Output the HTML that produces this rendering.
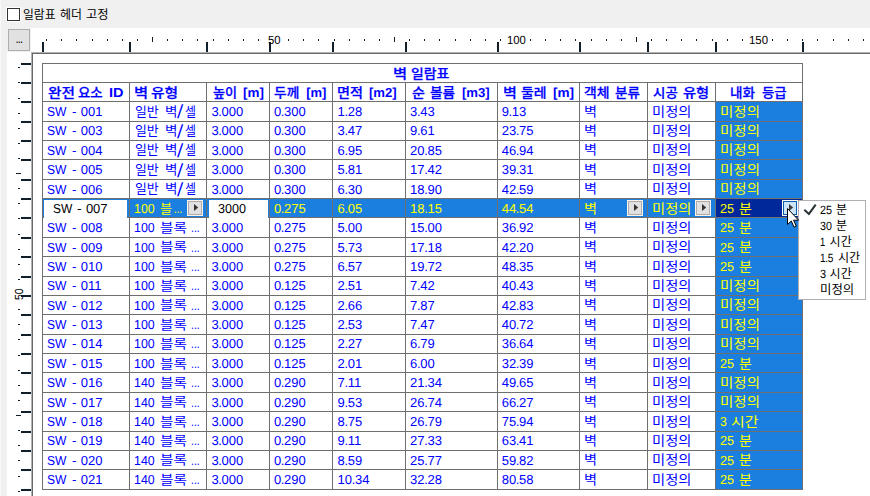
<!DOCTYPE html>
<html lang="ko"><head><meta charset="utf-8"><title>벽 일람표</title>
<style>
html,body{margin:0;padding:0;}
body{width:870px;height:496px;overflow:hidden;background:#f0f0f0;position:relative;font-family:"Liberation Sans","Noto Sans CJK KR",sans-serif;text-rendering:geometricPrecision;}
body>div,body>svg{position:absolute;}
.s{white-space:nowrap;transform-origin:0 0;line-height:20px;height:20px;color:#0000ff;}
.d{font-size:13px;}
.dk{font-size:13px;text-rendering:auto;}
.h{font-size:13px;font-weight:bold;}
.hk{font-size:13px;font-weight:500;-webkit-text-stroke:0.25px #0000ff;text-rendering:auto;}
.sl{font-size:19px;}
.m{font-size:12px;color:#000;}
.mk{font-size:12px;color:#000;text-rendering:auto;}
.lk{font-size:12px;color:#000;text-rendering:auto;}
.rl{font-size:11.8px;color:#000;}
.bt{font-size:10px;color:#1a1a1a;font-weight:bold;}
.y{color:#ffff00;}
.bk{color:#000;}
.p{margin:0 -0.4px;}
</style></head>
<body>
<div style="left:0px;top:0px;width:1px;height:496px;background:#f8f8f8;"></div>
<div style="left:6px;top:7px;width:15px;height:15px;background:#fff;"></div>
<div style="left:7px;top:8px;width:13px;height:13px;background:#fff;border:1px solid #333;box-sizing:border-box;"></div>
<div style="left:31px;top:28px;width:839px;height:24px;background:#fff;"></div>
<div style="left:7px;top:52px;width:24px;height:444px;background:#fff;"></div>
<div style="left:31px;top:52px;width:839px;height:444px;background:#fff;"></div>
<div style="left:8px;top:29px;width:22px;height:22px;background:#e1e1e1;border:1px solid #adadad;box-sizing:border-box;"></div>
<div style="left:31px;top:52px;width:839px;height:1px;background:#b4b4b4;"></div>
<div style="left:31px;top:52px;width:1px;height:444px;background:#b4b4b4;"></div>
<div style="left:32px;top:53px;width:838px;height:1px;background:#686868;"></div>
<div style="left:32px;top:53px;width:1px;height:443px;background:#686868;"></div>
<div style="left:46px;top:39px;width:1px;height:2px;background:#0f1e28;"></div>
<div style="left:61px;top:39px;width:1px;height:2px;background:#0f1e28;"></div>
<div style="left:76px;top:39px;width:1px;height:2px;background:#0f1e28;"></div>
<div style="left:92px;top:39px;width:1px;height:2px;background:#0f1e28;"></div>
<div style="left:107px;top:39px;width:1px;height:2px;background:#0f1e28;"></div>
<div style="left:122px;top:39px;width:1px;height:2px;background:#0f1e28;"></div>
<div style="left:137px;top:39px;width:1px;height:2px;background:#0f1e28;"></div>
<div style="left:152px;top:37px;width:1px;height:5px;background:#0f1e28;"></div>
<div style="left:167px;top:39px;width:1px;height:2px;background:#0f1e28;"></div>
<div style="left:182px;top:39px;width:1px;height:2px;background:#0f1e28;"></div>
<div style="left:197px;top:39px;width:1px;height:2px;background:#0f1e28;"></div>
<div style="left:213px;top:39px;width:1px;height:2px;background:#0f1e28;"></div>
<div style="left:228px;top:39px;width:1px;height:2px;background:#0f1e28;"></div>
<div style="left:243px;top:39px;width:1px;height:2px;background:#0f1e28;"></div>
<div style="left:258px;top:39px;width:1px;height:2px;background:#0f1e28;"></div>
<div style="left:288px;top:39px;width:1px;height:2px;background:#0f1e28;"></div>
<div style="left:303px;top:39px;width:1px;height:2px;background:#0f1e28;"></div>
<div style="left:318px;top:39px;width:1px;height:2px;background:#0f1e28;"></div>
<div style="left:334px;top:39px;width:1px;height:2px;background:#0f1e28;"></div>
<div style="left:349px;top:39px;width:1px;height:2px;background:#0f1e28;"></div>
<div style="left:364px;top:39px;width:1px;height:2px;background:#0f1e28;"></div>
<div style="left:379px;top:39px;width:1px;height:2px;background:#0f1e28;"></div>
<div style="left:394px;top:37px;width:1px;height:5px;background:#0f1e28;"></div>
<div style="left:409px;top:39px;width:1px;height:2px;background:#0f1e28;"></div>
<div style="left:424px;top:39px;width:1px;height:2px;background:#0f1e28;"></div>
<div style="left:439px;top:39px;width:1px;height:2px;background:#0f1e28;"></div>
<div style="left:455px;top:39px;width:1px;height:2px;background:#0f1e28;"></div>
<div style="left:470px;top:39px;width:1px;height:2px;background:#0f1e28;"></div>
<div style="left:485px;top:39px;width:1px;height:2px;background:#0f1e28;"></div>
<div style="left:500px;top:39px;width:1px;height:2px;background:#0f1e28;"></div>
<div style="left:530px;top:39px;width:1px;height:2px;background:#0f1e28;"></div>
<div style="left:545px;top:39px;width:1px;height:2px;background:#0f1e28;"></div>
<div style="left:560px;top:39px;width:1px;height:2px;background:#0f1e28;"></div>
<div style="left:575px;top:39px;width:1px;height:2px;background:#0f1e28;"></div>
<div style="left:591px;top:39px;width:1px;height:2px;background:#0f1e28;"></div>
<div style="left:606px;top:39px;width:1px;height:2px;background:#0f1e28;"></div>
<div style="left:621px;top:39px;width:1px;height:2px;background:#0f1e28;"></div>
<div style="left:636px;top:37px;width:1px;height:5px;background:#0f1e28;"></div>
<div style="left:651px;top:39px;width:1px;height:2px;background:#0f1e28;"></div>
<div style="left:666px;top:39px;width:1px;height:2px;background:#0f1e28;"></div>
<div style="left:681px;top:39px;width:1px;height:2px;background:#0f1e28;"></div>
<div style="left:696px;top:39px;width:1px;height:2px;background:#0f1e28;"></div>
<div style="left:712px;top:39px;width:1px;height:2px;background:#0f1e28;"></div>
<div style="left:727px;top:39px;width:1px;height:2px;background:#0f1e28;"></div>
<div style="left:742px;top:39px;width:1px;height:2px;background:#0f1e28;"></div>
<div style="left:772px;top:39px;width:1px;height:2px;background:#0f1e28;"></div>
<div style="left:787px;top:39px;width:1px;height:2px;background:#0f1e28;"></div>
<div style="left:802px;top:39px;width:1px;height:2px;background:#0f1e28;"></div>
<div style="left:817px;top:39px;width:1px;height:2px;background:#0f1e28;"></div>
<div style="left:833px;top:39px;width:1px;height:2px;background:#0f1e28;"></div>
<div style="left:848px;top:39px;width:1px;height:2px;background:#0f1e28;"></div>
<div style="left:863px;top:39px;width:1px;height:2px;background:#0f1e28;"></div>
<div style="left:42px;top:42px;width:2px;height:10px;background:#0f1e28;"></div>
<div style="left:129px;top:42px;width:2px;height:10px;background:#0f1e28;"></div>
<div style="left:206px;top:42px;width:2px;height:10px;background:#0f1e28;"></div>
<div style="left:269px;top:42px;width:2px;height:10px;background:#0f1e28;"></div>
<div style="left:332px;top:42px;width:2px;height:10px;background:#0f1e28;"></div>
<div style="left:405px;top:42px;width:2px;height:10px;background:#0f1e28;"></div>
<div style="left:497px;top:42px;width:2px;height:10px;background:#0f1e28;"></div>
<div style="left:579px;top:42px;width:2px;height:10px;background:#0f1e28;"></div>
<div style="left:647px;top:42px;width:2px;height:10px;background:#0f1e28;"></div>
<div style="left:715px;top:42px;width:2px;height:10px;background:#0f1e28;"></div>
<div style="left:802px;top:42px;width:2px;height:10px;background:#0f1e28;"></div>
<div style="left:18px;top:67px;width:2px;height:1px;background:#0f1e28;"></div>
<div style="left:18px;top:82px;width:2px;height:1px;background:#0f1e28;"></div>
<div style="left:18px;top:98px;width:2px;height:1px;background:#0f1e28;"></div>
<div style="left:18px;top:113px;width:2px;height:1px;background:#0f1e28;"></div>
<div style="left:18px;top:128px;width:2px;height:1px;background:#0f1e28;"></div>
<div style="left:18px;top:143px;width:2px;height:1px;background:#0f1e28;"></div>
<div style="left:18px;top:158px;width:2px;height:1px;background:#0f1e28;"></div>
<div style="left:16px;top:173px;width:5px;height:1px;background:#0f1e28;"></div>
<div style="left:18px;top:188px;width:2px;height:1px;background:#0f1e28;"></div>
<div style="left:18px;top:203px;width:2px;height:1px;background:#0f1e28;"></div>
<div style="left:18px;top:218px;width:2px;height:1px;background:#0f1e28;"></div>
<div style="left:18px;top:234px;width:2px;height:1px;background:#0f1e28;"></div>
<div style="left:18px;top:249px;width:2px;height:1px;background:#0f1e28;"></div>
<div style="left:18px;top:264px;width:2px;height:1px;background:#0f1e28;"></div>
<div style="left:18px;top:279px;width:2px;height:1px;background:#0f1e28;"></div>
<div class="s rl" style="left:8.6px;top:299.5px;transform:rotate(-90deg) scaleX(0.88);">50</div>
<div style="left:18px;top:309px;width:2px;height:1px;background:#0f1e28;"></div>
<div style="left:18px;top:324px;width:2px;height:1px;background:#0f1e28;"></div>
<div style="left:18px;top:339px;width:2px;height:1px;background:#0f1e28;"></div>
<div style="left:18px;top:355px;width:2px;height:1px;background:#0f1e28;"></div>
<div style="left:18px;top:370px;width:2px;height:1px;background:#0f1e28;"></div>
<div style="left:18px;top:385px;width:2px;height:1px;background:#0f1e28;"></div>
<div style="left:18px;top:400px;width:2px;height:1px;background:#0f1e28;"></div>
<div style="left:16px;top:415px;width:5px;height:1px;background:#0f1e28;"></div>
<div style="left:18px;top:430px;width:2px;height:1px;background:#0f1e28;"></div>
<div style="left:18px;top:445px;width:2px;height:1px;background:#0f1e28;"></div>
<div style="left:18px;top:460px;width:2px;height:1px;background:#0f1e28;"></div>
<div style="left:18px;top:476px;width:2px;height:1px;background:#0f1e28;"></div>
<div style="left:18px;top:491px;width:2px;height:1px;background:#0f1e28;"></div>
<div style="left:21px;top:63px;width:10px;height:2px;background:#0f1e28;"></div>
<div style="left:21px;top:82px;width:10px;height:2px;background:#0f1e28;"></div>
<div style="left:21px;top:101px;width:10px;height:2px;background:#0f1e28;"></div>
<div style="left:21px;top:121px;width:10px;height:2px;background:#0f1e28;"></div>
<div style="left:21px;top:140px;width:10px;height:2px;background:#0f1e28;"></div>
<div style="left:21px;top:159px;width:10px;height:2px;background:#0f1e28;"></div>
<div style="left:21px;top:179px;width:10px;height:2px;background:#0f1e28;"></div>
<div style="left:21px;top:198px;width:10px;height:2px;background:#0f1e28;"></div>
<div style="left:21px;top:217px;width:10px;height:2px;background:#0f1e28;"></div>
<div style="left:21px;top:237px;width:10px;height:2px;background:#0f1e28;"></div>
<div style="left:21px;top:256px;width:10px;height:2px;background:#0f1e28;"></div>
<div style="left:21px;top:276px;width:10px;height:2px;background:#0f1e28;"></div>
<div style="left:21px;top:295px;width:10px;height:2px;background:#0f1e28;"></div>
<div style="left:21px;top:314px;width:10px;height:2px;background:#0f1e28;"></div>
<div style="left:21px;top:334px;width:10px;height:2px;background:#0f1e28;"></div>
<div style="left:21px;top:353px;width:10px;height:2px;background:#0f1e28;"></div>
<div style="left:21px;top:372px;width:10px;height:2px;background:#0f1e28;"></div>
<div style="left:21px;top:392px;width:10px;height:2px;background:#0f1e28;"></div>
<div style="left:21px;top:411px;width:10px;height:2px;background:#0f1e28;"></div>
<div style="left:21px;top:431px;width:10px;height:2px;background:#0f1e28;"></div>
<div style="left:21px;top:450px;width:10px;height:2px;background:#0f1e28;"></div>
<div style="left:21px;top:469px;width:10px;height:2px;background:#0f1e28;"></div>
<div style="left:21px;top:489px;width:10px;height:2px;background:#0f1e28;"></div>
<div style="left:716px;top:102px;width:86px;height:387px;background:#1b7fe0;"></div>
<div style="left:43px;top:199px;width:759px;height:18px;background:#1b7fe0;"></div>
<div style="left:716px;top:199px;width:86px;height:18px;background:#00289a;"></div>
<div style="left:42px;top:63px;width:761px;height:1px;background:#6f6f6f;"></div>
<div style="left:42px;top:82px;width:761px;height:1px;background:#6f6f6f;"></div>
<div style="left:42px;top:101px;width:761px;height:1px;background:#6f6f6f;"></div>
<div style="left:42px;top:121px;width:761px;height:1px;background:#6f6f6f;"></div>
<div style="left:42px;top:140px;width:761px;height:1px;background:#6f6f6f;"></div>
<div style="left:42px;top:159px;width:761px;height:1px;background:#6f6f6f;"></div>
<div style="left:42px;top:179px;width:761px;height:1px;background:#6f6f6f;"></div>
<div style="left:42px;top:198px;width:761px;height:1px;background:#6f6f6f;"></div>
<div style="left:42px;top:217px;width:761px;height:1px;background:#6f6f6f;"></div>
<div style="left:42px;top:237px;width:761px;height:1px;background:#6f6f6f;"></div>
<div style="left:42px;top:256px;width:761px;height:1px;background:#6f6f6f;"></div>
<div style="left:42px;top:276px;width:761px;height:1px;background:#6f6f6f;"></div>
<div style="left:42px;top:295px;width:761px;height:1px;background:#6f6f6f;"></div>
<div style="left:42px;top:314px;width:761px;height:1px;background:#6f6f6f;"></div>
<div style="left:42px;top:334px;width:761px;height:1px;background:#6f6f6f;"></div>
<div style="left:42px;top:353px;width:761px;height:1px;background:#6f6f6f;"></div>
<div style="left:42px;top:372px;width:761px;height:1px;background:#6f6f6f;"></div>
<div style="left:42px;top:392px;width:761px;height:1px;background:#6f6f6f;"></div>
<div style="left:42px;top:411px;width:761px;height:1px;background:#6f6f6f;"></div>
<div style="left:42px;top:431px;width:761px;height:1px;background:#6f6f6f;"></div>
<div style="left:42px;top:450px;width:761px;height:1px;background:#6f6f6f;"></div>
<div style="left:42px;top:469px;width:761px;height:1px;background:#6f6f6f;"></div>
<div style="left:42px;top:489px;width:761px;height:1px;background:#6f6f6f;"></div>
<div style="left:42px;top:63px;width:1px;height:427px;background:#6f6f6f;"></div>
<div style="left:129px;top:82px;width:1px;height:408px;background:#6f6f6f;"></div>
<div style="left:206px;top:82px;width:1px;height:408px;background:#6f6f6f;"></div>
<div style="left:269px;top:82px;width:1px;height:408px;background:#6f6f6f;"></div>
<div style="left:332px;top:82px;width:1px;height:408px;background:#6f6f6f;"></div>
<div style="left:405px;top:82px;width:1px;height:408px;background:#6f6f6f;"></div>
<div style="left:497px;top:82px;width:1px;height:408px;background:#6f6f6f;"></div>
<div style="left:579px;top:82px;width:1px;height:408px;background:#6f6f6f;"></div>
<div style="left:647px;top:82px;width:1px;height:408px;background:#6f6f6f;"></div>
<div style="left:715px;top:82px;width:1px;height:408px;background:#6f6f6f;"></div>
<div style="left:802px;top:63px;width:1px;height:427px;background:#6f6f6f;"></div>
<div style="left:44px;top:200px;width:83px;height:18px;background:#fff;"></div>
<div style="left:209px;top:200px;width:59px;height:18px;background:#fff;"></div>
<div style="left:187px;top:200px;width:16px;height:16px;background:#e1e1e1;border:1px solid #fcf3ea;box-sizing:border-box;box-shadow:inset 0 0 0 1px #adadad;"></div>
<svg style="left:187px;top:200px;" width="16" height="16" viewBox="0 0 16 16"><path d="M7 4 L11.2 7.5 L7 11 Z" fill="#333"/></svg>
<div style="left:627px;top:200px;width:16px;height:16px;background:#e1e1e1;border:1px solid #fcf3ea;box-sizing:border-box;box-shadow:inset 0 0 0 1px #adadad;"></div>
<svg style="left:627px;top:200px;" width="16" height="16" viewBox="0 0 16 16"><path d="M7 4 L11.2 7.5 L7 11 Z" fill="#333"/></svg>
<div style="left:695px;top:200px;width:16px;height:16px;background:#e1e1e1;border:1px solid #fcf3ea;box-sizing:border-box;box-shadow:inset 0 0 0 1px #adadad;"></div>
<svg style="left:695px;top:200px;" width="16" height="16" viewBox="0 0 16 16"><path d="M7 4 L11.2 7.5 L7 11 Z" fill="#333"/></svg>
<div style="left:782px;top:200px;width:16px;height:16px;background:#cce4f7;border:1px solid #fff;box-sizing:border-box;box-shadow:inset 0 0 0 1px #0a5cb0;"></div>
<svg style="left:782px;top:200px;" width="16" height="16" viewBox="0 0 16 16"><path d="M7 4 L11.2 7.5 L7 11 Z" fill="#3c3c3c"/></svg>
<div style="left:798px;top:200px;width:68px;height:100px;background:#fff;border:1px solid #b0b0b6;box-sizing:border-box;"></div>
<div class="s hk" style="left:392.57px;top:64px;transform:scaleX(1.184);">벽</div>
<div class="s hk" style="left:411.40px;top:64px;transform:scaleX(1.068);">일람표</div>
<div class="s hk" style="left:47.54px;top:83px;transform:scaleX(1.124);">완전</div>
<div class="s hk" style="left:78.23px;top:83px;transform:scaleX(1.033);">요소</div>
<div class="s h" style="left:108.56px;top:83.07px;transform:scaleX(1.115);">ID</div>
<div class="s hk" style="left:134.32px;top:83px;transform:scaleX(1.184);">벽</div>
<div class="s hk" style="left:151.18px;top:83px;transform:scaleX(1.136);">유형</div>
<div class="s hk" style="left:212.60px;top:83px;transform:scaleX(1.007);">높이</div>
<div class="s h" style="left:242.98px;top:83.07px;transform:scaleX(1.032);">[m]</div>
<div class="s hk" style="left:274.47px;top:83px;transform:scaleX(1.056);">두께</div>
<div class="s h" style="left:306.15px;top:83.07px;">[m]</div>
<div class="s hk" style="left:337.41px;top:83px;transform:scaleX(1.088);">면적</div>
<div class="s h" style="left:368.99px;top:83.07px;transform:scaleX(1.010);">[m2]</div>
<div class="s hk" style="left:411.96px;top:83px;transform:scaleX(1.082);">순</div>
<div class="s hk" style="left:430.08px;top:83px;transform:scaleX(1.050);">볼륨</div>
<div class="s h" style="left:461.74px;top:83.07px;transform:scaleX(1.010);">[m3]</div>
<div class="s hk" style="left:502.84px;top:83px;transform:scaleX(1.158);">벽</div>
<div class="s hk" style="left:520.72px;top:83px;transform:scaleX(1.067);">둘레</div>
<div class="s h" style="left:552.72px;top:83.07px;transform:scaleX(1.045);">[m]</div>
<div class="s hk" style="left:584.47px;top:83px;transform:scaleX(1.067);">객체</div>
<div class="s hk" style="left:615.48px;top:83px;transform:scaleX(1.043);">분류</div>
<div class="s hk" style="left:652.58px;top:83px;transform:scaleX(1.035);">시공</div>
<div class="s hk" style="left:683.45px;top:83px;transform:scaleX(1.095);">유형</div>
<div class="s hk" style="left:730.21px;top:83px;transform:scaleX(1.044);">내화</div>
<div class="s hk" style="left:761.98px;top:83px;transform:scaleX(1.033);">등급</div>
<div class="s d" style="left:47.00px;top:102.04px;transform:scaleX(0.930);">SW</div>
<div class="s d" style="left:71.73px;top:102.04px;transform:scaleX(1.031);">-</div>
<div class="s d" style="left:80.75px;top:102.04px;">001</div>
<div class="s dk" style="left:134.76px;top:102px;transform:scaleX(0.989);">일반</div>
<div class="s dk" style="left:165.45px;top:102px;transform:scaleX(1.039);">벽</div>
<div class="s sl" style="left:178.43px;top:103.49px;transform:skewX(-3.88deg);">/</div>
<div class="s dk" style="left:184.81px;top:102px;transform:scaleX(0.917);">셀</div>
<div class="s d" style="left:211.40px;top:102.04px;">3<span class="p">.</span>000</div>
<div class="s d" style="left:273.90px;top:102.04px;">0<span class="p">.</span>300</div>
<div class="s d" style="left:337.60px;top:102.04px;">1<span class="p">.</span>28</div>
<div class="s d" style="left:410.10px;top:102.04px;">3<span class="p">.</span>43</div>
<div class="s d" style="left:501.75px;top:102.04px;">9<span class="p">.</span>13</div>
<div class="s dk" style="left:584.24px;top:102px;transform:scaleX(1.089);">벽</div>
<div class="s dk" style="left:652.13px;top:102px;transform:scaleX(1.098);">미정의</div>
<div class="s dk" style="left:719.86px;top:102px;transform:scaleX(1.114);color:#ffff00;">미정의</div>
<div class="s d" style="left:47.00px;top:121.41px;transform:scaleX(0.930);">SW</div>
<div class="s d" style="left:71.73px;top:121.41px;transform:scaleX(1.031);">-</div>
<div class="s d" style="left:80.75px;top:121.41px;">003</div>
<div class="s dk" style="left:134.76px;top:121px;transform:scaleX(0.989);">일반</div>
<div class="s dk" style="left:165.45px;top:121px;transform:scaleX(1.039);">벽</div>
<div class="s sl" style="left:178.43px;top:122.86px;transform:skewX(-3.88deg);">/</div>
<div class="s dk" style="left:184.81px;top:121px;transform:scaleX(0.917);">셀</div>
<div class="s d" style="left:211.40px;top:121.41px;">3<span class="p">.</span>000</div>
<div class="s d" style="left:273.90px;top:121.41px;">0<span class="p">.</span>300</div>
<div class="s d" style="left:337.60px;top:121.41px;">3<span class="p">.</span>47</div>
<div class="s d" style="left:410.10px;top:121.41px;">9<span class="p">.</span>61</div>
<div class="s d" style="left:501.75px;top:121.41px;">23<span class="p">.</span>75</div>
<div class="s dk" style="left:584.24px;top:121px;transform:scaleX(1.089);">벽</div>
<div class="s dk" style="left:652.13px;top:121px;transform:scaleX(1.098);">미정의</div>
<div class="s dk" style="left:719.86px;top:121px;transform:scaleX(1.114);color:#ffff00;">미정의</div>
<div class="s d" style="left:47.00px;top:140.78px;transform:scaleX(0.930);">SW</div>
<div class="s d" style="left:71.73px;top:140.78px;transform:scaleX(1.031);">-</div>
<div class="s d" style="left:80.75px;top:140.78px;">004</div>
<div class="s dk" style="left:134.76px;top:140px;transform:scaleX(0.989);">일반</div>
<div class="s dk" style="left:165.45px;top:140px;transform:scaleX(1.039);">벽</div>
<div class="s sl" style="left:178.43px;top:142.23px;transform:skewX(-3.88deg);">/</div>
<div class="s dk" style="left:184.81px;top:140px;transform:scaleX(0.917);">셀</div>
<div class="s d" style="left:211.40px;top:140.78px;">3<span class="p">.</span>000</div>
<div class="s d" style="left:273.90px;top:140.78px;">0<span class="p">.</span>300</div>
<div class="s d" style="left:337.60px;top:140.78px;">6<span class="p">.</span>95</div>
<div class="s d" style="left:410.10px;top:140.78px;">20<span class="p">.</span>85</div>
<div class="s d" style="left:501.75px;top:140.78px;">46<span class="p">.</span>94</div>
<div class="s dk" style="left:584.24px;top:140px;transform:scaleX(1.089);">벽</div>
<div class="s dk" style="left:652.13px;top:140px;transform:scaleX(1.098);">미정의</div>
<div class="s dk" style="left:719.86px;top:140px;transform:scaleX(1.114);color:#ffff00;">미정의</div>
<div class="s d" style="left:47.00px;top:160.15px;transform:scaleX(0.930);">SW</div>
<div class="s d" style="left:71.73px;top:160.15px;transform:scaleX(1.031);">-</div>
<div class="s d" style="left:80.75px;top:160.15px;">005</div>
<div class="s dk" style="left:134.76px;top:160px;transform:scaleX(0.989);">일반</div>
<div class="s dk" style="left:165.45px;top:160px;transform:scaleX(1.039);">벽</div>
<div class="s sl" style="left:178.43px;top:161.60px;transform:skewX(-3.88deg);">/</div>
<div class="s dk" style="left:184.81px;top:160px;transform:scaleX(0.917);">셀</div>
<div class="s d" style="left:211.40px;top:160.15px;">3<span class="p">.</span>000</div>
<div class="s d" style="left:273.90px;top:160.15px;">0<span class="p">.</span>300</div>
<div class="s d" style="left:337.60px;top:160.15px;">5<span class="p">.</span>81</div>
<div class="s d" style="left:410.10px;top:160.15px;">17<span class="p">.</span>42</div>
<div class="s d" style="left:501.75px;top:160.15px;">39<span class="p">.</span>31</div>
<div class="s dk" style="left:584.24px;top:160px;transform:scaleX(1.089);">벽</div>
<div class="s dk" style="left:652.13px;top:160px;transform:scaleX(1.098);">미정의</div>
<div class="s dk" style="left:719.86px;top:160px;transform:scaleX(1.114);color:#ffff00;">미정의</div>
<div class="s d" style="left:47.00px;top:179.52px;transform:scaleX(0.930);">SW</div>
<div class="s d" style="left:71.73px;top:179.52px;transform:scaleX(1.031);">-</div>
<div class="s d" style="left:80.75px;top:179.52px;">006</div>
<div class="s dk" style="left:134.76px;top:179px;transform:scaleX(0.989);">일반</div>
<div class="s dk" style="left:165.45px;top:179px;transform:scaleX(1.039);">벽</div>
<div class="s sl" style="left:178.43px;top:180.97px;transform:skewX(-3.88deg);">/</div>
<div class="s dk" style="left:184.81px;top:179px;transform:scaleX(0.917);">셀</div>
<div class="s d" style="left:211.40px;top:179.52px;">3<span class="p">.</span>000</div>
<div class="s d" style="left:273.90px;top:179.52px;">0<span class="p">.</span>300</div>
<div class="s d" style="left:337.60px;top:179.52px;">6<span class="p">.</span>30</div>
<div class="s d" style="left:410.10px;top:179.52px;">18<span class="p">.</span>90</div>
<div class="s d" style="left:501.75px;top:179.52px;">42<span class="p">.</span>59</div>
<div class="s dk" style="left:584.24px;top:179px;transform:scaleX(1.089);">벽</div>
<div class="s dk" style="left:652.13px;top:179px;transform:scaleX(1.098);">미정의</div>
<div class="s dk" style="left:719.86px;top:179px;transform:scaleX(1.114);color:#ffff00;">미정의</div>
<div class="s d" style="left:52.51px;top:198.89px;transform:scaleX(0.920);color:#000;">SW</div>
<div class="s d" style="left:76.88px;top:198.89px;transform:scaleX(1.046);color:#000;">-</div>
<div class="s d" style="left:85.90px;top:198.89px;color:#000;">007</div>
<div class="s d" style="left:134.15px;top:198.89px;transform:scaleX(0.953);color:#ffff00;">100</div>
<div class="s dk" style="left:159.84px;top:199px;transform:scaleX(1.014);color:#ffff00;">블</div>
<div class="s d" style="left:174.04px;top:198.89px;transform:scaleX(0.765);color:#ffff00;">...</div>
<div class="s d" style="left:218.02px;top:198.89px;transform:scaleX(0.968);color:#000;">3000</div>
<div class="s d" style="left:273.90px;top:198.89px;color:#ffff00;">0<span class="p">.</span>275</div>
<div class="s d" style="left:337.60px;top:198.89px;color:#ffff00;">6<span class="p">.</span>05</div>
<div class="s d" style="left:410.10px;top:198.89px;color:#ffff00;">18<span class="p">.</span>15</div>
<div class="s d" style="left:501.75px;top:198.89px;color:#ffff00;">44<span class="p">.</span>54</div>
<div class="s dk" style="left:584.24px;top:199px;transform:scaleX(1.089);color:#ffff00;">벽</div>
<div class="s dk" style="left:652.13px;top:199px;transform:scaleX(1.098);color:#ffff00;">미정의</div>
<div class="s d" style="left:719.87px;top:198.89px;transform:scaleX(0.974);color:#ffff00;">25</div>
<div class="s dk" style="left:739.20px;top:199px;transform:scaleX(1.071);color:#ffff00;">분</div>
<div class="s d" style="left:47.00px;top:218.26px;transform:scaleX(0.930);">SW</div>
<div class="s d" style="left:71.73px;top:218.26px;transform:scaleX(1.031);">-</div>
<div class="s d" style="left:80.75px;top:218.26px;">008</div>
<div class="s d" style="left:134.30px;top:218.26px;transform:scaleX(0.951);">100</div>
<div class="s dk" style="left:159.91px;top:218px;transform:scaleX(1.127);">블록</div>
<div class="s d" style="left:191.39px;top:218.26px;transform:scaleX(0.806);">...</div>
<div class="s d" style="left:211.40px;top:218.26px;">3<span class="p">.</span>000</div>
<div class="s d" style="left:273.90px;top:218.26px;">0<span class="p">.</span>275</div>
<div class="s d" style="left:337.60px;top:218.26px;">5<span class="p">.</span>00</div>
<div class="s d" style="left:410.10px;top:218.26px;">15<span class="p">.</span>00</div>
<div class="s d" style="left:501.75px;top:218.26px;">36<span class="p">.</span>92</div>
<div class="s dk" style="left:584.24px;top:218px;transform:scaleX(1.089);">벽</div>
<div class="s dk" style="left:652.13px;top:218px;transform:scaleX(1.098);">미정의</div>
<div class="s d" style="left:719.87px;top:218.26px;transform:scaleX(0.974);color:#ffff00;">25</div>
<div class="s dk" style="left:739.20px;top:218px;transform:scaleX(1.071);color:#ffff00;">분</div>
<div class="s d" style="left:47.00px;top:237.63px;transform:scaleX(0.930);">SW</div>
<div class="s d" style="left:71.73px;top:237.63px;transform:scaleX(1.031);">-</div>
<div class="s d" style="left:80.75px;top:237.63px;">009</div>
<div class="s d" style="left:134.30px;top:237.63px;transform:scaleX(0.951);">100</div>
<div class="s dk" style="left:159.91px;top:237px;transform:scaleX(1.127);">블록</div>
<div class="s d" style="left:191.39px;top:237.63px;transform:scaleX(0.806);">...</div>
<div class="s d" style="left:211.40px;top:237.63px;">3<span class="p">.</span>000</div>
<div class="s d" style="left:273.90px;top:237.63px;">0<span class="p">.</span>275</div>
<div class="s d" style="left:337.60px;top:237.63px;">5<span class="p">.</span>73</div>
<div class="s d" style="left:410.10px;top:237.63px;">17<span class="p">.</span>18</div>
<div class="s d" style="left:501.75px;top:237.63px;">42<span class="p">.</span>20</div>
<div class="s dk" style="left:584.24px;top:237px;transform:scaleX(1.089);">벽</div>
<div class="s dk" style="left:652.13px;top:237px;transform:scaleX(1.098);">미정의</div>
<div class="s d" style="left:719.87px;top:237.63px;transform:scaleX(0.974);color:#ffff00;">25</div>
<div class="s dk" style="left:739.20px;top:237px;transform:scaleX(1.071);color:#ffff00;">분</div>
<div class="s d" style="left:47.00px;top:257.00px;transform:scaleX(0.930);">SW</div>
<div class="s d" style="left:71.73px;top:257.00px;transform:scaleX(1.031);">-</div>
<div class="s d" style="left:80.75px;top:257.00px;">010</div>
<div class="s d" style="left:134.30px;top:257.00px;transform:scaleX(0.951);">100</div>
<div class="s dk" style="left:159.91px;top:257px;transform:scaleX(1.127);">블록</div>
<div class="s d" style="left:191.39px;top:257.00px;transform:scaleX(0.806);">...</div>
<div class="s d" style="left:211.40px;top:257.00px;">3<span class="p">.</span>000</div>
<div class="s d" style="left:273.90px;top:257.00px;">0<span class="p">.</span>275</div>
<div class="s d" style="left:337.60px;top:257.00px;">6<span class="p">.</span>57</div>
<div class="s d" style="left:410.10px;top:257.00px;">19<span class="p">.</span>72</div>
<div class="s d" style="left:501.75px;top:257.00px;">48<span class="p">.</span>35</div>
<div class="s dk" style="left:584.24px;top:257px;transform:scaleX(1.089);">벽</div>
<div class="s dk" style="left:652.13px;top:257px;transform:scaleX(1.098);">미정의</div>
<div class="s d" style="left:719.87px;top:257.00px;transform:scaleX(0.974);color:#ffff00;">25</div>
<div class="s dk" style="left:739.20px;top:257px;transform:scaleX(1.071);color:#ffff00;">분</div>
<div class="s d" style="left:47.00px;top:276.37px;transform:scaleX(0.930);">SW</div>
<div class="s d" style="left:71.73px;top:276.37px;transform:scaleX(1.031);">-</div>
<div class="s d" style="left:80.75px;top:276.37px;">011</div>
<div class="s d" style="left:134.30px;top:276.37px;transform:scaleX(0.951);">100</div>
<div class="s dk" style="left:159.91px;top:276px;transform:scaleX(1.127);">블록</div>
<div class="s d" style="left:191.39px;top:276.37px;transform:scaleX(0.806);">...</div>
<div class="s d" style="left:211.40px;top:276.37px;">3<span class="p">.</span>000</div>
<div class="s d" style="left:273.90px;top:276.37px;">0<span class="p">.</span>125</div>
<div class="s d" style="left:337.60px;top:276.37px;">2<span class="p">.</span>51</div>
<div class="s d" style="left:410.10px;top:276.37px;">7<span class="p">.</span>42</div>
<div class="s d" style="left:501.75px;top:276.37px;">40<span class="p">.</span>43</div>
<div class="s dk" style="left:584.24px;top:276px;transform:scaleX(1.089);">벽</div>
<div class="s dk" style="left:652.13px;top:276px;transform:scaleX(1.098);">미정의</div>
<div class="s dk" style="left:719.86px;top:276px;transform:scaleX(1.114);color:#ffff00;">미정의</div>
<div class="s d" style="left:47.00px;top:295.74px;transform:scaleX(0.930);">SW</div>
<div class="s d" style="left:71.73px;top:295.74px;transform:scaleX(1.031);">-</div>
<div class="s d" style="left:80.75px;top:295.74px;">012</div>
<div class="s d" style="left:134.30px;top:295.74px;transform:scaleX(0.951);">100</div>
<div class="s dk" style="left:159.91px;top:295px;transform:scaleX(1.127);">블록</div>
<div class="s d" style="left:191.39px;top:295.74px;transform:scaleX(0.806);">...</div>
<div class="s d" style="left:211.40px;top:295.74px;">3<span class="p">.</span>000</div>
<div class="s d" style="left:273.90px;top:295.74px;">0<span class="p">.</span>125</div>
<div class="s d" style="left:337.60px;top:295.74px;">2<span class="p">.</span>66</div>
<div class="s d" style="left:410.10px;top:295.74px;">7<span class="p">.</span>87</div>
<div class="s d" style="left:501.75px;top:295.74px;">42<span class="p">.</span>83</div>
<div class="s dk" style="left:584.24px;top:295px;transform:scaleX(1.089);">벽</div>
<div class="s dk" style="left:652.13px;top:295px;transform:scaleX(1.098);">미정의</div>
<div class="s dk" style="left:719.86px;top:295px;transform:scaleX(1.114);color:#ffff00;">미정의</div>
<div class="s d" style="left:47.00px;top:315.11px;transform:scaleX(0.930);">SW</div>
<div class="s d" style="left:71.73px;top:315.11px;transform:scaleX(1.031);">-</div>
<div class="s d" style="left:80.75px;top:315.11px;">013</div>
<div class="s d" style="left:134.30px;top:315.11px;transform:scaleX(0.951);">100</div>
<div class="s dk" style="left:159.91px;top:315px;transform:scaleX(1.127);">블록</div>
<div class="s d" style="left:191.39px;top:315.11px;transform:scaleX(0.806);">...</div>
<div class="s d" style="left:211.40px;top:315.11px;">3<span class="p">.</span>000</div>
<div class="s d" style="left:273.90px;top:315.11px;">0<span class="p">.</span>125</div>
<div class="s d" style="left:337.60px;top:315.11px;">2<span class="p">.</span>53</div>
<div class="s d" style="left:410.10px;top:315.11px;">7<span class="p">.</span>47</div>
<div class="s d" style="left:501.75px;top:315.11px;">40<span class="p">.</span>72</div>
<div class="s dk" style="left:584.24px;top:315px;transform:scaleX(1.089);">벽</div>
<div class="s dk" style="left:652.13px;top:315px;transform:scaleX(1.098);">미정의</div>
<div class="s dk" style="left:719.86px;top:315px;transform:scaleX(1.114);color:#ffff00;">미정의</div>
<div class="s d" style="left:47.00px;top:334.48px;transform:scaleX(0.930);">SW</div>
<div class="s d" style="left:71.73px;top:334.48px;transform:scaleX(1.031);">-</div>
<div class="s d" style="left:80.75px;top:334.48px;">014</div>
<div class="s d" style="left:134.30px;top:334.48px;transform:scaleX(0.951);">100</div>
<div class="s dk" style="left:159.91px;top:334px;transform:scaleX(1.127);">블록</div>
<div class="s d" style="left:191.39px;top:334.48px;transform:scaleX(0.806);">...</div>
<div class="s d" style="left:211.40px;top:334.48px;">3<span class="p">.</span>000</div>
<div class="s d" style="left:273.90px;top:334.48px;">0<span class="p">.</span>125</div>
<div class="s d" style="left:337.60px;top:334.48px;">2<span class="p">.</span>27</div>
<div class="s d" style="left:410.10px;top:334.48px;">6<span class="p">.</span>79</div>
<div class="s d" style="left:501.75px;top:334.48px;">36<span class="p">.</span>64</div>
<div class="s dk" style="left:584.24px;top:334px;transform:scaleX(1.089);">벽</div>
<div class="s dk" style="left:652.13px;top:334px;transform:scaleX(1.098);">미정의</div>
<div class="s dk" style="left:719.86px;top:334px;transform:scaleX(1.114);color:#ffff00;">미정의</div>
<div class="s d" style="left:47.00px;top:353.85px;transform:scaleX(0.930);">SW</div>
<div class="s d" style="left:71.73px;top:353.85px;transform:scaleX(1.031);">-</div>
<div class="s d" style="left:80.75px;top:353.85px;">015</div>
<div class="s d" style="left:134.30px;top:353.85px;transform:scaleX(0.951);">100</div>
<div class="s dk" style="left:159.91px;top:354px;transform:scaleX(1.127);">블록</div>
<div class="s d" style="left:191.39px;top:353.85px;transform:scaleX(0.806);">...</div>
<div class="s d" style="left:211.40px;top:353.85px;">3<span class="p">.</span>000</div>
<div class="s d" style="left:273.90px;top:353.85px;">0<span class="p">.</span>125</div>
<div class="s d" style="left:337.60px;top:353.85px;">2<span class="p">.</span>01</div>
<div class="s d" style="left:410.10px;top:353.85px;">6<span class="p">.</span>00</div>
<div class="s d" style="left:501.75px;top:353.85px;">32<span class="p">.</span>39</div>
<div class="s dk" style="left:584.24px;top:354px;transform:scaleX(1.089);">벽</div>
<div class="s dk" style="left:652.13px;top:354px;transform:scaleX(1.098);">미정의</div>
<div class="s d" style="left:719.87px;top:353.85px;transform:scaleX(0.974);color:#ffff00;">25</div>
<div class="s dk" style="left:739.20px;top:354px;transform:scaleX(1.071);color:#ffff00;">분</div>
<div class="s d" style="left:47.00px;top:373.22px;transform:scaleX(0.930);">SW</div>
<div class="s d" style="left:71.73px;top:373.22px;transform:scaleX(1.031);">-</div>
<div class="s d" style="left:80.75px;top:373.22px;">016</div>
<div class="s d" style="left:134.30px;top:373.22px;transform:scaleX(0.951);">140</div>
<div class="s dk" style="left:159.91px;top:373px;transform:scaleX(1.127);">블록</div>
<div class="s d" style="left:191.39px;top:373.22px;transform:scaleX(0.806);">...</div>
<div class="s d" style="left:211.40px;top:373.22px;">3<span class="p">.</span>000</div>
<div class="s d" style="left:273.90px;top:373.22px;">0<span class="p">.</span>290</div>
<div class="s d" style="left:337.60px;top:373.22px;">7<span class="p">.</span>11</div>
<div class="s d" style="left:410.10px;top:373.22px;">21<span class="p">.</span>34</div>
<div class="s d" style="left:501.75px;top:373.22px;">49<span class="p">.</span>65</div>
<div class="s dk" style="left:584.24px;top:373px;transform:scaleX(1.089);">벽</div>
<div class="s dk" style="left:652.13px;top:373px;transform:scaleX(1.098);">미정의</div>
<div class="s dk" style="left:719.86px;top:373px;transform:scaleX(1.114);color:#ffff00;">미정의</div>
<div class="s d" style="left:47.00px;top:392.59px;transform:scaleX(0.930);">SW</div>
<div class="s d" style="left:71.73px;top:392.59px;transform:scaleX(1.031);">-</div>
<div class="s d" style="left:80.75px;top:392.59px;">017</div>
<div class="s d" style="left:134.30px;top:392.59px;transform:scaleX(0.951);">140</div>
<div class="s dk" style="left:159.91px;top:392px;transform:scaleX(1.127);">블록</div>
<div class="s d" style="left:191.39px;top:392.59px;transform:scaleX(0.806);">...</div>
<div class="s d" style="left:211.40px;top:392.59px;">3<span class="p">.</span>000</div>
<div class="s d" style="left:273.90px;top:392.59px;">0<span class="p">.</span>290</div>
<div class="s d" style="left:337.60px;top:392.59px;">9<span class="p">.</span>53</div>
<div class="s d" style="left:410.10px;top:392.59px;">26<span class="p">.</span>74</div>
<div class="s d" style="left:501.75px;top:392.59px;">66<span class="p">.</span>27</div>
<div class="s dk" style="left:584.24px;top:392px;transform:scaleX(1.089);">벽</div>
<div class="s dk" style="left:652.13px;top:392px;transform:scaleX(1.098);">미정의</div>
<div class="s dk" style="left:719.86px;top:392px;transform:scaleX(1.114);color:#ffff00;">미정의</div>
<div class="s d" style="left:47.00px;top:411.96px;transform:scaleX(0.930);">SW</div>
<div class="s d" style="left:71.73px;top:411.96px;transform:scaleX(1.031);">-</div>
<div class="s d" style="left:80.75px;top:411.96px;">018</div>
<div class="s d" style="left:134.30px;top:411.96px;transform:scaleX(0.951);">140</div>
<div class="s dk" style="left:159.91px;top:412px;transform:scaleX(1.127);">블록</div>
<div class="s d" style="left:191.39px;top:411.96px;transform:scaleX(0.806);">...</div>
<div class="s d" style="left:211.40px;top:411.96px;">3<span class="p">.</span>000</div>
<div class="s d" style="left:273.90px;top:411.96px;">0<span class="p">.</span>290</div>
<div class="s d" style="left:337.60px;top:411.96px;">8<span class="p">.</span>75</div>
<div class="s d" style="left:410.10px;top:411.96px;">26<span class="p">.</span>79</div>
<div class="s d" style="left:501.75px;top:411.96px;">75<span class="p">.</span>94</div>
<div class="s dk" style="left:584.24px;top:412px;transform:scaleX(1.089);">벽</div>
<div class="s dk" style="left:652.13px;top:412px;transform:scaleX(1.098);">미정의</div>
<div class="s d" style="left:720.13px;top:411.96px;transform:scaleX(0.944);color:#ffff00;">3</div>
<div class="s dk" style="left:731.04px;top:412px;transform:scaleX(1.147);color:#ffff00;">시간</div>
<div class="s d" style="left:47.00px;top:431.33px;transform:scaleX(0.930);">SW</div>
<div class="s d" style="left:71.73px;top:431.33px;transform:scaleX(1.031);">-</div>
<div class="s d" style="left:80.75px;top:431.33px;">019</div>
<div class="s d" style="left:134.30px;top:431.33px;transform:scaleX(0.951);">140</div>
<div class="s dk" style="left:159.91px;top:431px;transform:scaleX(1.127);">블록</div>
<div class="s d" style="left:191.39px;top:431.33px;transform:scaleX(0.806);">...</div>
<div class="s d" style="left:211.40px;top:431.33px;">3<span class="p">.</span>000</div>
<div class="s d" style="left:273.90px;top:431.33px;">0<span class="p">.</span>290</div>
<div class="s d" style="left:337.60px;top:431.33px;">9<span class="p">.</span>11</div>
<div class="s d" style="left:410.10px;top:431.33px;">27<span class="p">.</span>33</div>
<div class="s d" style="left:501.75px;top:431.33px;">63<span class="p">.</span>41</div>
<div class="s dk" style="left:584.24px;top:431px;transform:scaleX(1.089);">벽</div>
<div class="s dk" style="left:652.13px;top:431px;transform:scaleX(1.098);">미정의</div>
<div class="s d" style="left:719.87px;top:431.33px;transform:scaleX(0.974);color:#ffff00;">25</div>
<div class="s dk" style="left:739.20px;top:431px;transform:scaleX(1.071);color:#ffff00;">분</div>
<div class="s d" style="left:47.00px;top:450.70px;transform:scaleX(0.930);">SW</div>
<div class="s d" style="left:71.73px;top:450.70px;transform:scaleX(1.031);">-</div>
<div class="s d" style="left:80.75px;top:450.70px;">020</div>
<div class="s d" style="left:134.30px;top:450.70px;transform:scaleX(0.951);">140</div>
<div class="s dk" style="left:159.91px;top:450px;transform:scaleX(1.127);">블록</div>
<div class="s d" style="left:191.39px;top:450.70px;transform:scaleX(0.806);">...</div>
<div class="s d" style="left:211.40px;top:450.70px;">3<span class="p">.</span>000</div>
<div class="s d" style="left:273.90px;top:450.70px;">0<span class="p">.</span>290</div>
<div class="s d" style="left:337.60px;top:450.70px;">8<span class="p">.</span>59</div>
<div class="s d" style="left:410.10px;top:450.70px;">25<span class="p">.</span>77</div>
<div class="s d" style="left:501.75px;top:450.70px;">59<span class="p">.</span>82</div>
<div class="s dk" style="left:584.24px;top:450px;transform:scaleX(1.089);">벽</div>
<div class="s dk" style="left:652.13px;top:450px;transform:scaleX(1.098);">미정의</div>
<div class="s d" style="left:719.87px;top:450.70px;transform:scaleX(0.974);color:#ffff00;">25</div>
<div class="s dk" style="left:739.20px;top:450px;transform:scaleX(1.071);color:#ffff00;">분</div>
<div class="s d" style="left:47.00px;top:470.07px;transform:scaleX(0.930);">SW</div>
<div class="s d" style="left:71.73px;top:470.07px;transform:scaleX(1.031);">-</div>
<div class="s d" style="left:80.75px;top:470.07px;">021</div>
<div class="s d" style="left:134.30px;top:470.07px;transform:scaleX(0.951);">140</div>
<div class="s dk" style="left:159.91px;top:470px;transform:scaleX(1.127);">블록</div>
<div class="s d" style="left:191.39px;top:470.07px;transform:scaleX(0.806);">...</div>
<div class="s d" style="left:211.40px;top:470.07px;">3<span class="p">.</span>000</div>
<div class="s d" style="left:273.90px;top:470.07px;">0<span class="p">.</span>290</div>
<div class="s d" style="left:337.60px;top:470.07px;">10<span class="p">.</span>34</div>
<div class="s d" style="left:410.10px;top:470.07px;">32<span class="p">.</span>28</div>
<div class="s d" style="left:501.75px;top:470.07px;">80<span class="p">.</span>58</div>
<div class="s dk" style="left:584.24px;top:470px;transform:scaleX(1.089);">벽</div>
<div class="s dk" style="left:652.13px;top:470px;transform:scaleX(1.098);">미정의</div>
<div class="s d" style="left:719.87px;top:470.07px;transform:scaleX(0.974);color:#ffff00;">25</div>
<div class="s dk" style="left:739.20px;top:470px;transform:scaleX(1.071);color:#ffff00;">분</div>
<div class="s m" style="left:819.70px;top:199.60px;transform:scaleX(0.900);">25</div>
<div class="s mk" style="left:836.10px;top:200px;">분</div>
<div class="s m" style="left:819.71px;top:215.65px;transform:scaleX(0.888);">30</div>
<div class="s mk" style="left:836.10px;top:216px;">분</div>
<div class="s m" style="left:820.22px;top:231.90px;transform:scaleX(0.780);">1</div>
<div class="s mk" style="left:829.60px;top:232px;">시간</div>
<div class="s m" style="left:820.16px;top:247.50px;transform:scaleX(0.841);">1<span class="p">.</span>5</div>
<div class="s mk" style="left:837.70px;top:248px;transform:scaleX(1.007);">시간</div>
<div class="s m" style="left:819.69px;top:263.90px;transform:scaleX(0.913);">3</div>
<div class="s mk" style="left:829.60px;top:264px;">시간</div>
<div class="s mk" style="left:819.71px;top:280px;transform:scaleX(1.031);">미정의</div>
<div class="s lk" style="left:23.01px;top:5px;transform:scaleX(0.984);">일람표</div>
<div class="s lk" style="left:60.11px;top:5px;transform:scaleX(0.988);">헤더</div>
<div class="s lk" style="left:85.74px;top:5px;transform:scaleX(1.020);">고정</div>
<div class="s rl" style="left:268.02px;top:29.95px;transform:scaleX(0.955);">50</div>
<div class="s rl" style="left:506.74px;top:29.95px;transform:scaleX(0.959);">100</div>
<div class="s rl" style="left:748.73px;top:29.95px;transform:scaleX(0.970);">150</div>
<div class="s bt" style="left:15.64px;top:31.20px;transform:scaleX(0.807);">...</div>
<svg style="left:802px;top:202px;" width="16" height="14" viewBox="0 0 16 14"><path d="M2.3 7.8 L6.9 11.9 L13.7 2.6" fill="none" stroke="#2b3338" stroke-width="2"/></svg>
<svg style="left:786px;top:207px;" width="14" height="22" viewBox="0 0 14 22"><path d="M1.5 1.5 L1.5 17.5 L5.3 14 L8 20.2 L10.3 19.2 L7.6 13.2 L12.6 13.2 Z" fill="#fff" stroke="#000" stroke-width="1"/></svg>
</body></html>
